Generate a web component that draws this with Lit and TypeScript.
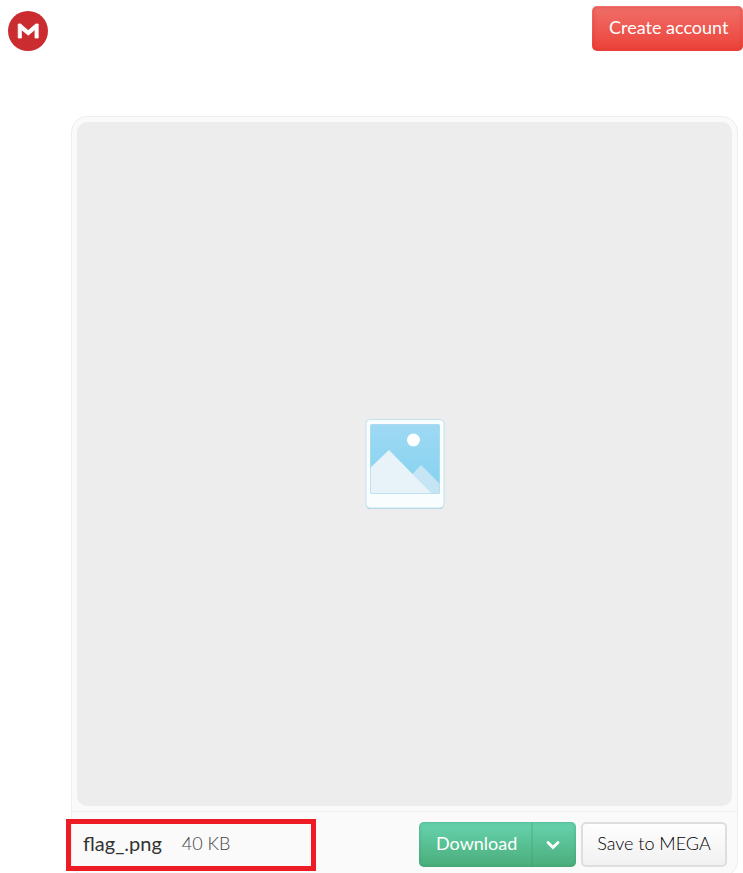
import { LitElement, html, css } from "lit";
import { customElement, property } from "lit/decorators.js";

@customElement("app-root")
export class AppRoot extends LitElement {
  @property() fileName = "flag_.png";
  @property() fileSize = "40 KB";

  static styles = css`
    :host {
      display: flex;
      flex-direction: column;
      height: 100vh;
      overflow: hidden;
      background: #fff;
      color: #333;
      font-family: Lato, "Open Sans", sans-serif;
      font-size: 18px;
      line-height: 24px;
    }
    * {
      box-sizing: border-box;
    }
    header {
      display: flex;
      justify-content: space-between;
      align-items: flex-end;
      padding: 6px 0 0 8px;
    }
    .logo,
    .logo svg,
    .thumb {
      display: block;
    }
    button {
      height: 45px;
      margin: 0;
      padding: 0 16px 4px;
      border: 1px solid transparent;
      border-radius: 5px;
      font: inherit;
      white-space: nowrap;
      cursor: pointer;
    }
    .create {
      width: 151px;
      color: #fff;
      background: linear-gradient(#f0706a, #ec4138) border-box;
      box-shadow: inset 0 0 3px 1px rgba(205, 50, 45, 0.35);
    }
    main {
      flex: 1;
      display: flex;
      flex-direction: column;
      margin: 65px 5px -4px 71px;
      border: 1px solid #eee;
      border-radius: 16px;
      background: #fafafa;
    }
    .preview {
      flex: 1;
      display: grid;
      place-items: center;
      margin: 5px;
      border-radius: 10px;
      background: #ededed;
    }
    footer {
      position: relative;
      display: flex;
      justify-content: space-between;
      align-items: center;
      padding: 10px 10px 9px 11px;
      border-top: 1px solid #eee;
    }
    .file {
      display: flex;
      align-items: center;
      gap: 20px;
      padding-bottom: 4px;
    }
    .name {
      font-size: 20px;
    }
    .size {
      color: #444;
      font-weight: 300;
    }
    .mark {
      position: absolute;
      left: -6px;
      top: 7px;
      width: 250px;
      height: 52px;
      border: 5px solid #ed1c24;
      pointer-events: none;
    }
    .actions {
      display: flex;
      gap: 5px;
    }
    .split {
      display: flex;
      border-radius: 5px;
      background: linear-gradient(#67d3ae, #4aad7b);
      box-shadow: inset 0 0 3px 1px rgba(55, 150, 105, 0.35);
    }
    .split button {
      color: #fff;
      background: none;
    }
    .split .download {
      width: 112px;
    }
    .split .more {
      display: grid;
      place-items: center;
      width: 45px;
      padding: 0 2px 0 0;
      border-left: 2px solid rgba(55, 150, 105, 0.25);
      border-radius: 0;
    }
    .save {
      width: 146px;
      padding: 0 14px 4px;
      color: #000;
      font-weight: 300;
      border: 2px solid #dedede;
      background: linear-gradient(#fefefe, #f1f1f1);
    }
  `;

  render() {
    return html`
      <header>
        <a class="logo" href="#" aria-label="MEGA">
          <svg width="40" height="40" viewBox="0 0 40 40">
            <circle cx="20" cy="20" r="20" fill="#cb2c30" />
            <path
              d="M10.2 27V13H12.6L20.2 19.6L27.8 13H30.2V27H27V18.6L20.2 24.2L13.4 18.6V27Z"
              fill="#fff"
              stroke="#fff"
              stroke-width=".8"
              stroke-linejoin="round"
            />
          </svg>
        </a>
        <button class="create">Create account</button>
      </header>
      <main>
        <div class="preview">
          <svg class="thumb" width="80" height="92" viewBox="0 0 80 92" role="img" aria-label="Image file">
            <defs>
              <linearGradient id="sky" x1="0" y1="0" x2="0" y2="1">
                <stop offset="0" stop-color="#9fd9f3" />
                <stop offset="1" stop-color="#82d2f0" />
              </linearGradient>
              <clipPath id="photo"><rect x="5" y="6" width="70" height="70" rx="2" /></clipPath>
            </defs>
            <rect x="1" y="3" width="78" height="88" rx="4" fill="#b2cee2" />
            <rect x="1" y="1.5" width="78" height="88.5" rx="4" fill="#fafdfe" stroke="#c2e2f0" />
            <g clip-path="url(#photo)">
              <rect x="5" y="6" width="70" height="70" fill="url(#sky)" />
              <path d="M38 66L56 47L75 66V76H38Z" fill="#c5e5f5" />
              <path d="M5 50L24 32L67 76H5Z" fill="#e7f3f9" />
            </g>
            <rect x="5.5" y="6.5" width="69" height="69" rx="2" fill="none" stroke="#aedcf0" stroke-opacity=".75" />
            <circle cx="48.5" cy="22" r="6.5" fill="#fff" />
          </svg>
        </div>
        <footer>
          <div class="file">
            <span class="name">${this.fileName}</span>
            <span class="size">${this.fileSize}</span>
          </div>
          <div class="mark"></div>
          <div class="actions">
            <div class="split">
              <button class="download">Download</button>
              <button class="more" aria-label="More download options">
                <svg width="14" height="10" viewBox="0 0 14 10">
                  <path d="M2 2.5L7 7.5L12 2.5" fill="none" stroke="#fff" stroke-width="2.8" stroke-linecap="round" />
                </svg>
              </button>
            </div>
            <button class="save">Save to MEGA</button>
          </div>
        </footer>
      </main>
    `;
  }
}
